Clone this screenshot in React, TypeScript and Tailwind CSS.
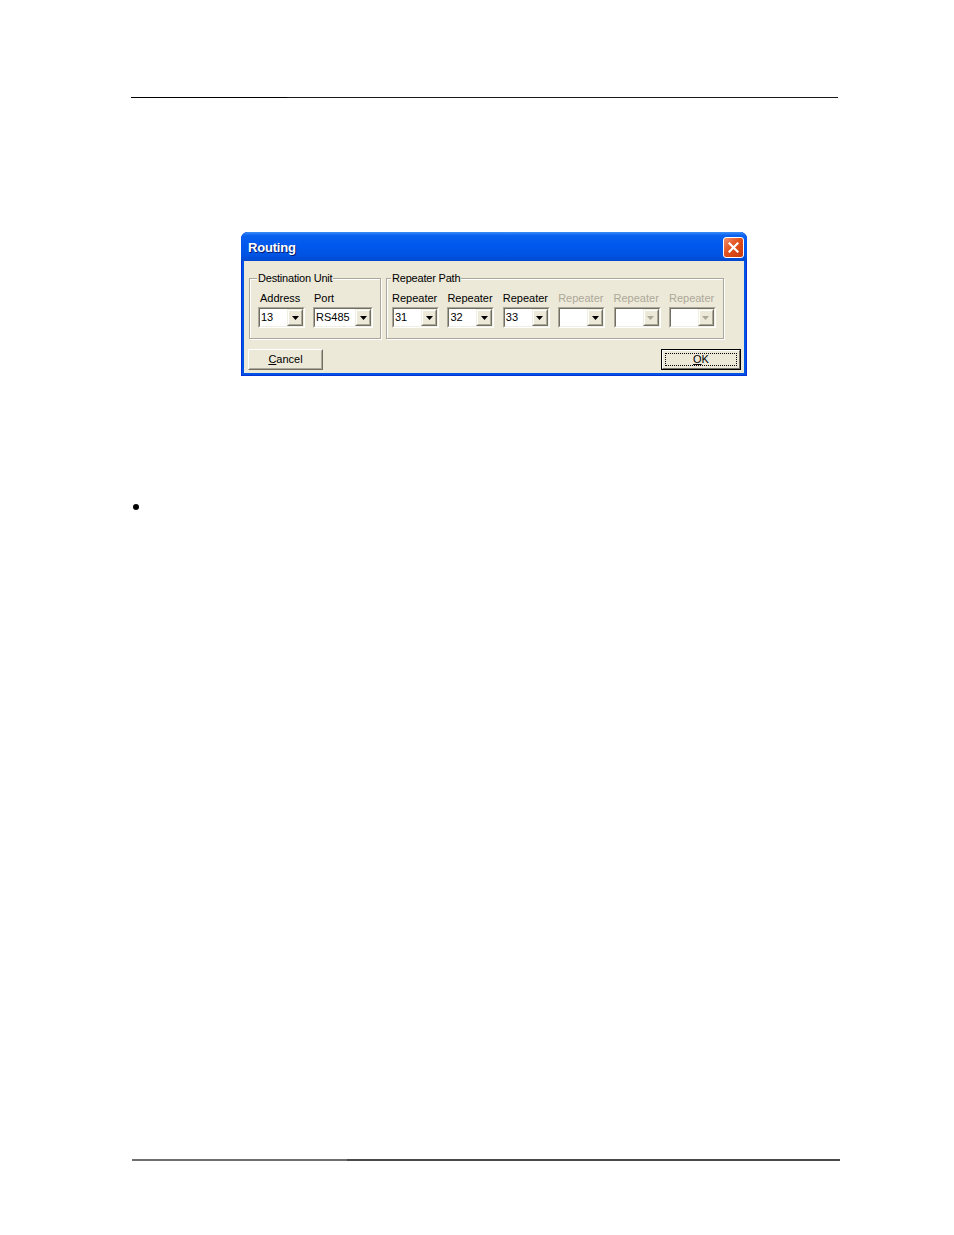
import React from "react";

const font = { fontFamily: '"Liberation Sans", Arial, sans-serif' };

function Arrow({ gray }: { gray?: boolean }) {
  return (
    <svg width="7" height="4" viewBox="0 0 7 4">
      <polygon points="0,0 7,0 3.5,4" fill={gray ? "#aca899" : "#000"} />
    </svg>
  );
}

function Combo({ width, value, grayArrow }: { width: number; value?: string; grayArrow?: boolean }) {
  return (
    <div
      className="h-[21px] border border-t-[#aca899] border-l-[#aca899] border-b-white border-r-white"
      style={{ width }}
    >
      <div className="h-full flex border border-t-[#716f64] border-l-[#716f64] border-b-[#f1efe2] border-r-[#f1efe2] bg-white">
        <div className="flex-1 pl-[1px] text-[11px] leading-[16px] text-black">{value}</div>
        <div className="w-[16px] h-[17px] border border-t-[#f1efe2] border-l-[#f1efe2] border-b-[#716f64] border-r-[#716f64]">
          <div className="w-full h-full flex items-center justify-center bg-[#ece9d8] border border-t-white border-l-white border-b-[#aca899] border-r-[#aca899]">
            <Arrow gray={grayArrow} />
          </div>
        </div>
      </div>
    </div>
  );
}

function Field({
  label,
  value,
  width,
  disabled,
  grayArrow,
  labelPad,
}: {
  label: string;
  value?: string;
  width: number;
  disabled?: boolean;
  grayArrow?: boolean;
  labelPad: string;
}) {
  return (
    <div className="flex flex-col gap-[2px]">
      <div className={`h-[13px] text-[11px] leading-[13px] ${labelPad} ${disabled ? "text-[#aca899]" : "text-black"}`}>
        {label}
      </div>
      <Combo width={width} value={value} grayArrow={grayArrow} />
    </div>
  );
}

function Group({
  title,
  width,
  legendLeft,
  padLeft,
  gap,
  children,
}: {
  title: string;
  width: number;
  legendLeft: string;
  padLeft: string;
  gap: string;
  children: React.ReactNode;
}) {
  return (
    <div
      className="relative h-[61px] border border-[#aca899] shadow-[inset_1px_1px_0_#fff,1px_1px_0_#fff]"
      style={{ width }}
    >
      <div className={`absolute top-[-7px] ${legendLeft} px-[1px] bg-[#ece9d8] text-[11px] leading-[13px] text-black tracking-[-0.2px]`}>
        {title}
      </div>
      <div className={`flex ${padLeft} ${gap} pt-[13px]`}>{children}</div>
    </div>
  );
}

export default function App() {
  return (
    <div className="w-[954px] h-[1235px] bg-white flex flex-col" style={font}>
      <div className="mt-[97px] ml-[131px] w-[707px] h-px flex">
        <div className="w-[156px] h-full bg-black" />
        <div className="flex-1 h-full bg-[#1a1a1a]" />
      </div>

      <div className="mt-[134px] ml-[241px] w-[506px] flex flex-col rounded-t-[7px] overflow-hidden bg-[#0054e3] shadow-[inset_1px_0_0_#0831d9,inset_-1px_0_0_#0831d9,inset_0_-1px_0_#0831d9]">
        <div className="h-[29px] flex items-center justify-between pl-[7px] pr-[3px] bg-[linear-gradient(to_bottom,#3d8ef8_0%,#0a62ee_12%,#0058ee_45%,#0054e3_80%,#0048cf_100%)]">
          <span className="pt-[3px] text-white font-bold text-[13px] leading-[16px] tracking-[-0.2px] [text-shadow:1px_1px_0_#0a1a6a]">
            Routing
          </span>
          <div className="mt-[2px] w-[21px] h-[21px] rounded-[3px] border border-white bg-[linear-gradient(135deg,#f09070_0%,#e2511c_45%,#c83c0c_100%)] flex items-center justify-center">
            <svg width="11" height="11" viewBox="0 0 11 11">
              <path d="M1.5 1.5 L9.5 9.5 M9.5 1.5 L1.5 9.5" stroke="#fff" strokeWidth="2.2" strokeLinecap="square" />
            </svg>
          </div>
        </div>

        <div className="mx-[3px] mb-[3px] h-[112px] bg-[#ece9d8] flex flex-col">
          <div className="flex gap-[5px] pl-[5px] pt-[17px]">
            <Group title="Destination Unit" width={132} legendLeft="left-[7px]" padLeft="pl-[8px]" gap="gap-[8px]">
              <Field label="Address" value="13" width={47} labelPad="pl-[2px]" />
              <Field label="Port" value="RS485" width={60} labelPad="pl-[1px]" />
            </Group>
            <Group title="Repeater Path" width={338} legendLeft="left-[4px]" padLeft="pl-[5px]" gap="gap-[8.4px]">
              <Field label="Repeater" value="31" width={47} labelPad="pl-0" />
              <Field label="Repeater" value="32" width={47} labelPad="pl-0" />
              <Field label="Repeater" value="33" width={47} labelPad="pl-0" />
              <Field label="Repeater" width={47} labelPad="pl-0" disabled />
              <Field label="Repeater" width={47} labelPad="pl-0" disabled grayArrow />
              <Field label="Repeater" width={47} labelPad="pl-0" disabled grayArrow />
            </Group>
          </div>

          <div className="flex justify-between pl-[4px] pr-[3px] mt-[10px]">
            <div className="w-[75px] h-[21px] border border-t-white border-l-white border-b-[#716f64] border-r-[#716f64]">
              <div className="w-full h-full border border-t-[#ece9d8] border-l-[#ece9d8] border-b-[#aca899] border-r-[#aca899] bg-[#ece9d8] flex items-center justify-center text-[11px] leading-[13px] text-black">
                <span>
                  <span className="underline underline-offset-[1px]">C</span>ancel
                </span>
              </div>
            </div>
            <div className="w-[80px] h-[21px] border border-black">
              <div className="w-full h-full border border-t-white border-l-white border-b-[#716f64] border-r-[#716f64] bg-[#ece9d8] p-[2px]">
                <div className="w-full h-full border border-dotted border-black flex items-center justify-center text-[11px] leading-[13px] text-black">
                  <span>
                    <span className="underline underline-offset-[1px]">O</span>K
                  </span>
                </div>
              </div>
            </div>
          </div>
        </div>
      </div>

      <div className="mt-[128px] ml-[133px] w-[6px] h-[6px] rounded-full bg-black" />

      <div className="mt-[649px] ml-[132px] w-[708px] h-[2px] flex">
        <div className="w-[215px] h-full bg-[#6e6e6e]" />
        <div className="flex-1 h-full bg-[#4a4a4a]" />
      </div>
    </div>
  );
}
